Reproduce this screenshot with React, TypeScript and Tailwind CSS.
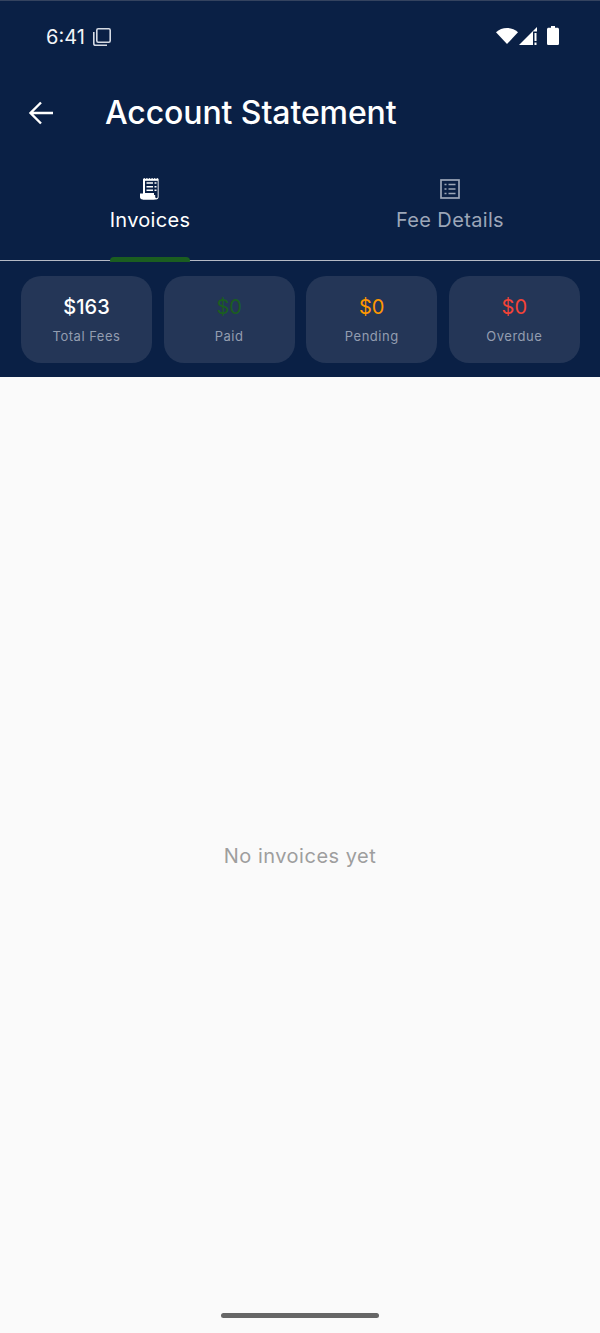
import React from "react";

const stats = [
  { value: "$163", label: "Total Fees", color: "text-white font-medium" },
  { value: "$0", label: "Paid", color: "text-[#1b5e20]" },
  { value: "$0", label: "Pending", color: "text-[#ff9800]" },
  { value: "$0", label: "Overdue", color: "text-[#f44336]" },
];

function CopyIcon() {
  return (
    <svg width="20" height="20" viewBox="0 0 20 20" fill="none" stroke="#d5dae3" strokeWidth="1.6">
      <rect x="4.8" y="1.8" width="13.4" height="13.4" rx="1.4" />
      <path d="M1.8 5v11.4c0 1 .8 1.8 1.8 1.8H15" />
    </svg>
  );
}

function StatusIcons() {
  return (
    <div className="flex items-center -mt-[2px]">
      <svg width="22" height="16" viewBox="0 0 22 16" fill="white">
        <path d="M11 16 0 4.2C3 1.6 6.8 0 11 0s8 1.6 11 4.2L11 16z" />
      </svg>
      <svg width="18" height="18" viewBox="0 0 18 18" fill="white" className="ml-[1px]">
        <path d="M0 18 18 0v4.500h-4V18H0z" />
        <rect x="15.500" y="6" width="2" height="8" />
        <rect x="15.500" y="15.500" width="2" height="2.500" />
      </svg>
      <svg width="12" height="19" viewBox="0 0 12 19" fill="white" className="ml-[10px]">
        <path d="M4 0h4v1.800h2.400c.9 0 1.600.7 1.600 1.600v14c0 .9-.7 1.600-1.600 1.600H1.600C.7 19 0 18.300 0 17.400v-14c0-.9.7-1.600 1.600-1.600H4V0z" />
      </svg>
    </div>
  );
}

function BackArrow() {
  return (
    <svg width="26" height="26" viewBox="0 0 26 26" fill="none" stroke="white" strokeWidth="2.400">
      <path d="M25 13H3M13 2.500 2.500 13 13 23.500" />
    </svg>
  );
}

function ReceiptIcon() {
  return (
    <svg width="20" height="22" viewBox="0 0 20 22" fill="none">
      {/* paper with a serrated top */}
      <path
        d="M3 1l1.300-1 1.300 1 1.300-1 1.300 1 1.300-1 1.300 1 1.300-1 1.300 1 1.300-1 1.300 1 1.300-1 1.300 1v18c0 1.400-1.100 2.500-2.500 2.500H3V1z"
        fill="white"
      />
      <path d="M5 2.800h12.700V15H5z" fill="#0a2045" />
      <path d="M6.500 4.200H13v1.600H6.500zM14.500 4.200h2v1.600h-2zM6.500 7.900H13v1.600H6.500zM14.500 7.900h2v1.600h-2zM6.500 11.500H13v1.600H6.500zM14.500 11.500h2v1.600h-2z" fill="white" />
      <path d="M14 15h3.700v4c0 .7-.6 1.200-1.200 1.200s-1.300-.5-1.300-1.200v-2H14v-2z" fill="#0a2045" />
      <path d="M0 15.500h13.500v3c0 1 .4 2 1.200 3H2.500C1 21.500 0 20.500 0 19v-3.500z" fill="white" />
    </svg>
  );
}

function ListIcon() {
  return (
    <svg width="20" height="20" viewBox="0 0 20 20" fill="none" stroke="#9ca6b8" strokeWidth="1.700">
      <rect x="1" y="1" width="18" height="18" />
      <path d="M4.500 5.500h2M8.500 5.500h7M4.500 10h2M8.500 10h7M4.500 14.500h2M8.500 14.500h7" />
    </svg>
  );
}

export default function App() {
  return (
    <div className="w-[600px] h-[1333px] flex flex-col bg-[#fafafa] font-['Inter',sans-serif] overflow-hidden">
      <div className="bg-[#0a2045] border-t border-[#34435f] flex flex-col">
        <div className="h-[71px] flex items-center justify-between pl-[46px] pr-[41px]">
          <div className="flex items-center gap-[7px]">
            <span className="text-[20px] text-[#f2f4f7]">6:41</span>
            <CopyIcon />
          </div>
          <StatusIcons />
        </div>
        <div className="h-[82px] flex items-center pl-[28px]">
          <BackArrow />
          <h1 className="ml-[51px] text-[32px] font-medium text-white tracking-[-0.1px]">Account Statement</h1>
        </div>
        <div className="relative h-[107px] flex border-b-[1.5px] border-[#b5bac5]">
          <div className="flex-1 flex flex-col items-center pt-[24px] gap-[8px]">
            <ReceiptIcon />
            <span className="text-[20px] leading-[24px] text-white tracking-[0.3px]">Invoices</span>
            <div className="absolute left-[110px] bottom-[-1.5px] w-[80px] h-[5px] rounded-t-[4px] bg-[#1b5e20]" />
          </div>
          <div className="flex-1 flex flex-col items-center pt-[25px] gap-[9px]">
            <ListIcon />
            <span className="text-[20px] leading-[24px] text-[#9ca6b8] tracking-[0.35px]">Fee Details</span>
          </div>
        </div>
        <div className="h-[116px] flex gap-[11.6px] pl-[21px] pr-[20.2px] pt-[15px]">
          {stats.map((s) => (
            <div key={s.label} className="flex-1 h-[87px] rounded-[20px] bg-[#243657] flex flex-col items-center pt-[17px]">
              <span className={`text-[20px] leading-[28px] ${s.color}`}>{s.value}</span>
              <span className="mt-[7px] text-[13px] leading-[16px] text-[#939db0] tracking-[0.5px]">{s.label}</span>
            </div>
          ))}
        </div>
      </div>
      <div className="flex-1 flex flex-col items-center">
        <div className="flex-1 flex items-center justify-center w-full pt-[21px]">
          <span className="text-[20px] text-[#9e9e9e] tracking-[0.5px]">No invoices yet</span>
        </div>
        <div className="w-[158px] h-[5px] rounded-full bg-[#666666] mb-[15px]" />
      </div>
    </div>
  );
}
